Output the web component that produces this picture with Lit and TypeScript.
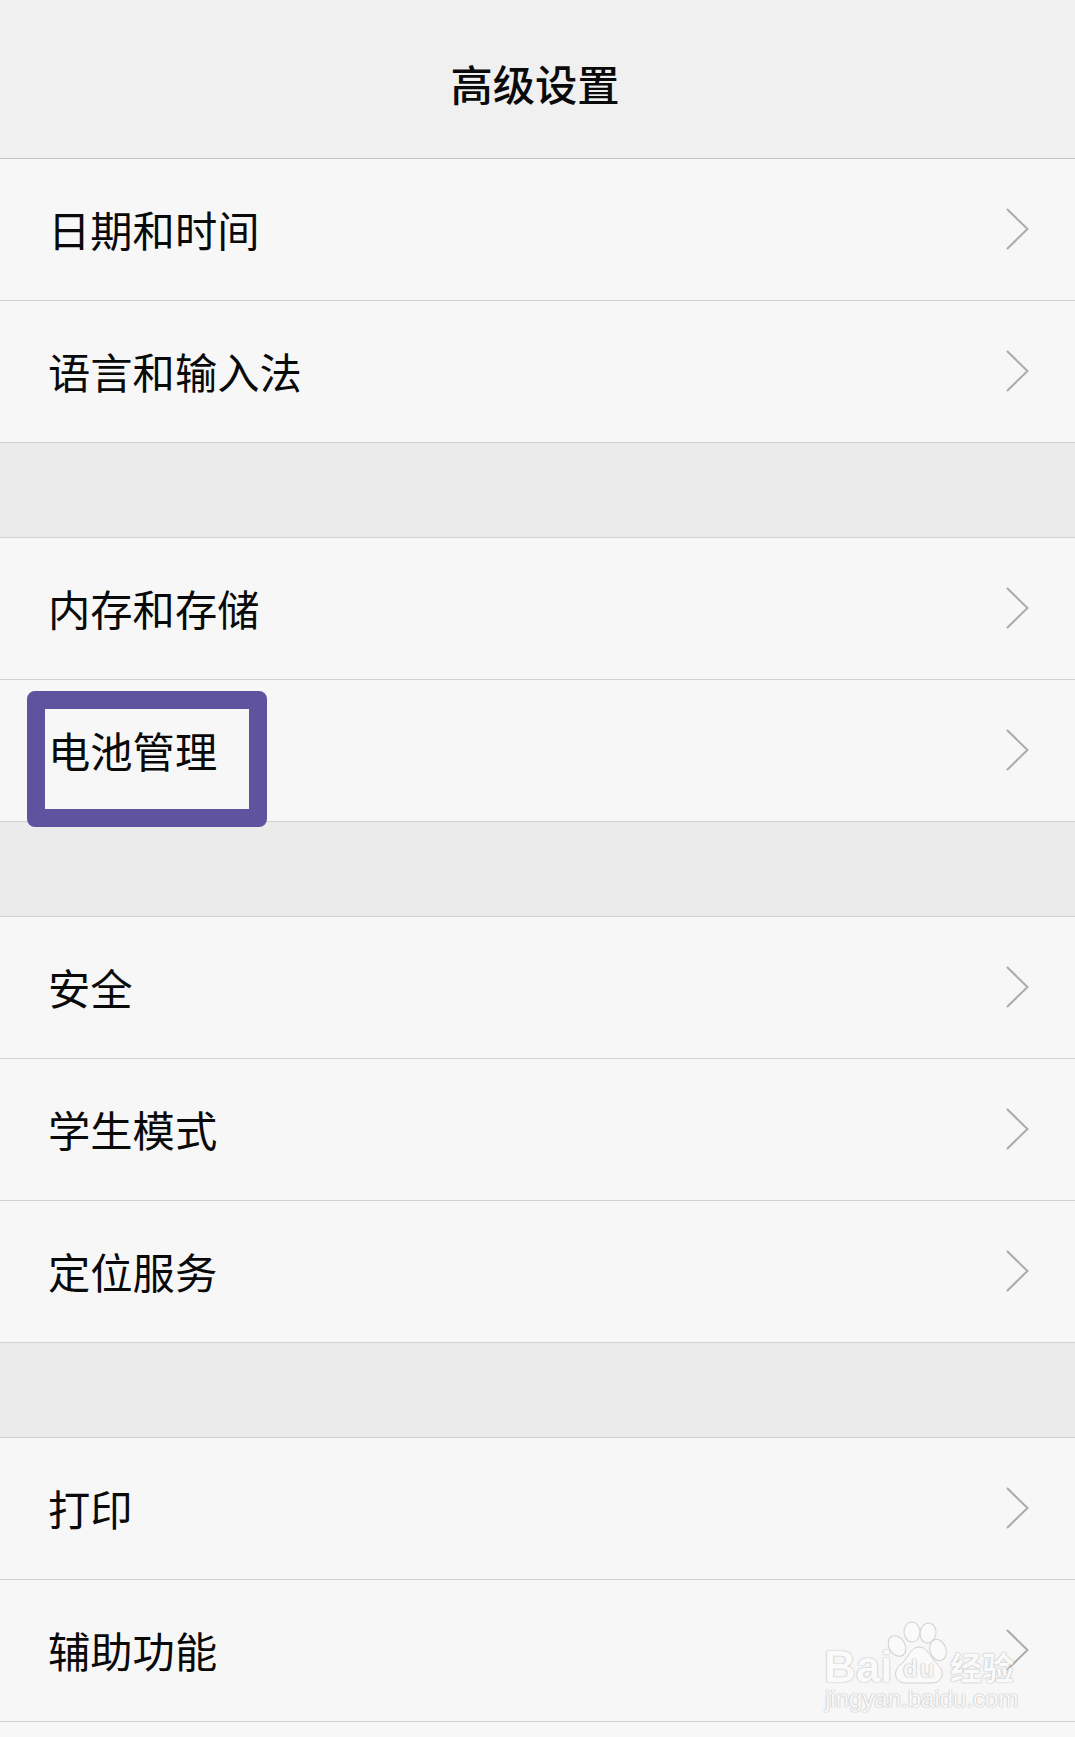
import { LitElement, html, css } from "lit";
import { customElement } from "lit/decorators.js";

const groups = [
  ["日期和时间", "语言和输入法"],
  ["内存和存储", "电池管理"],
  ["安全", "学生模式", "定位服务"],
  ["打印", "辅助功能"],
];

@customElement("app-root")
export class AppRoot extends LitElement {
  static styles = css`
    :host {
      display: block;
      position: relative;
      width: 1075px;
      height: 1737px;
      overflow: hidden;
      background: #f7f7f7;
      font-family: "Noto Sans CJK SC", "Liberation Sans", sans-serif;
      color: #0a0a0a;
    }
    .header {
      height: 159px;
      box-sizing: border-box;
      display: flex;
      align-items: center;
      justify-content: center;
      padding: 6px 5px 0 0;
      background: #f0f0f0;
      font-size: 42.3px;
      font-weight: 500;
      border-bottom: 1px solid #c4c4c4;
    }
    .gap {
      height: 95px;
      box-sizing: border-box;
      background: #ebebeb;
      border-bottom: 1px solid #d2d2d2;
    }
    .row {
      height: 142px;
      box-sizing: border-box;
      display: flex;
      align-items: center;
      justify-content: space-between;
      padding: 0 46px 0 48px;
      background: #f7f7f7;
      border-bottom: 1px solid #d2d2d2;
      font-size: 42.3px;
      position: relative;
    }
    .label { line-height: 60px; margin-top: -2px; }
    .chev { width: 23px; height: 42px; display: block; position: relative; top: -1px; }
    .mark {
      position: absolute;
      left: 27px;
      top: 11px;
      width: 240px;
      height: 136px;
      box-sizing: border-box;
      border: 18px solid #5f529f;
      border-radius: 8px;
      pointer-events: none;
    }
    .wm {
      position: absolute;
      left: 822px;
      top: 1620px;
      width: 200px;
      height: 100px;
      color: #fafafa;
      pointer-events: none;
    }
    .wm svg { position: absolute; left: 0; top: 0; width: 200px; height: 100px; }
    .wm span {
      position: absolute;
      font-family: "Liberation Sans", sans-serif;
      text-shadow: 0 0 1px #aeaeae, 0 0 2px #c8c8c8;
      white-space: nowrap;
    }
    .wm .bai { left: 2px; top: 27px; font-size: 44px; line-height: 40px; font-weight: 700; }
    .wm .du { left: 81px; top: 37px; font-size: 24px; line-height: 24px; font-weight: 700; letter-spacing: 2px; color: #f7f7f7; }
    .wm .cn { left: 128px; top: 26px; font-size: 32px; line-height: 40px; font-family: "Noto Sans CJK SC", sans-serif; font-weight: 700; }
    .wm .url { left: 3px; top: 69px; font-size: 24px; line-height: 20px; }
  `;

  private chevron() {
    return html`<svg class="chev" viewBox="0 0 23 42" fill="none" stroke="#ababab" stroke-width="2">
      <path d="M1 1 L21.5 21 L1 41"></path>
    </svg>`;
  }

  render() {
    return html`
      <div class="header">高级设置</div>
      ${groups.map(
        (g, i) => html`
          ${i > 0 ? html`<div class="gap"></div>` : ""}
          ${g.map(
            (t) => html`<div class="row">
              <span class="label">${t}</span>
              ${this.chevron()}
              ${t === "电池管理" ? html`<div class="mark"></div>` : ""}
            </div>`
          )}
        `
      )}
      <div class="wm">
        <svg viewBox="0 0 200 100" fill="#fafafa" stroke="#d0d0d0" stroke-width="1">
          <ellipse cx="75" cy="26" rx="8" ry="11" transform="rotate(-30 75 26)"></ellipse>
          <ellipse cx="90" cy="12" rx="8" ry="10" transform="rotate(-5 90 12)"></ellipse>
          <ellipse cx="106" cy="13" rx="8" ry="10" transform="rotate(10 106 13)"></ellipse>
          <ellipse cx="116" cy="30" rx="8" ry="11" transform="rotate(-20 116 30)"></ellipse>
          <path d="M97 27 C106 27 108 38 116 45 C124 52 120 64 108 63 L86 63 C73 64 70 52 78 45 C86 40 88 27 97 27 Z"></path>
        </svg>
        <span class="bai">Bai</span>
        <span class="du">du</span>
        <span class="cn">经验</span>
        <span class="url">jingyan.baidu.com</span>
      </div>
    `;
  }
}
